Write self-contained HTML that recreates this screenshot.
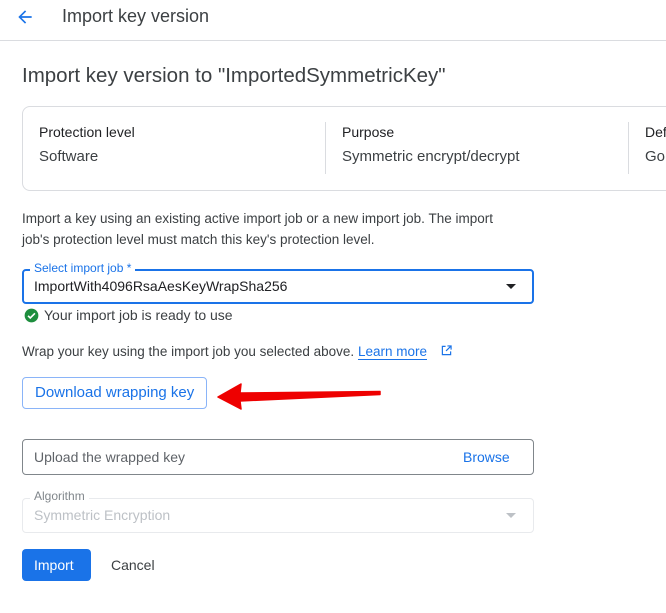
<!DOCTYPE html>
<html><head><meta charset="utf-8"><style>
body{margin:0;width:666px;height:613px;background:#fff;font-family:"Liberation Sans",Arial,sans-serif;color:#202124;position:relative;overflow:hidden}
.a{position:absolute;white-space:nowrap}
.t14{font-size:14px;color:#3c4043}
</style></head><body>
<svg class="a" style="left:15px;top:7px" width="20" height="20" viewBox="0 0 24 24"><path d="M20 11H7.83l5.59-5.59L12 4l-8 8 8 8 1.41-1.41L7.83 13H20v-2z" fill="#1a73e8"/></svg>
<div class="a" style="left:62px;top:6px;font-size:18px;color:#3c4043">Import key version</div>
<div class="a" style="left:0;top:40px;width:666px;height:1px;background:#dadce0"></div>
<div class="a" style="left:22px;top:64px;font-size:20.5px;color:#3c4043">Import key version to "ImportedSymmetricKey"</div>
<div class="a" style="left:22px;top:106px;width:660px;height:83px;border:1px solid #dadce0;border-radius:8px"></div>
<div class="a" style="left:325px;top:122px;width:1px;height:52px;background:#dadce0"></div>
<div class="a" style="left:628px;top:122px;width:1px;height:52px;background:#dadce0"></div>
<div class="a" style="left:39px;top:124px;font-size:14px">Protection level</div>
<div class="a" style="left:39px;top:148px;font-size:15px;color:#3c4043">Software</div>
<div class="a" style="left:342px;top:124px;font-size:14px">Purpose</div>
<div class="a" style="left:342px;top:148px;font-size:15px;color:#3c4043">Symmetric encrypt/decrypt</div>
<div class="a" style="left:645px;top:124px;font-size:14px">Def</div>
<div class="a" style="left:645px;top:148px;font-size:15px;color:#3c4043">Go</div>
<div class="a t14" style="left:22px;top:208px;line-height:21px;white-space:normal;width:500px;font-size:13.5px">Import a key using an existing active import job or a new import job. The import job's protection level must match this key's protection level.</div>
<div class="a" style="left:22px;top:269px;width:508px;height:31px;border:2px solid #1a73e8;border-radius:4px"></div>
<div class="a" style="left:30px;top:261px;background:#fff;padding:0 4px;font-size:12px;color:#1a73e8">Select import job *</div>
<div class="a" style="left:34px;top:278px;font-size:14px">ImportWith4096RsaAesKeyWrapSha256</div>
<div class="a" style="left:506px;top:284px;border-left:5px solid transparent;border-right:5px solid transparent;border-top:5px solid #202124"></div>
<svg class="a" style="left:24px;top:308px" width="15" height="15" viewBox="0 0 24 24"><circle cx="12" cy="12" r="11" fill="#1e8e3e"/><path d="M6.5 12.5l3.5 3.5 7.5-7.5" stroke="#fff" stroke-width="2.6" fill="none"/></svg>
<div class="a" style="left:44px;top:307px;font-size:14px;color:#3c4043">Your import job is ready to use</div>
<div class="a t14" style="left:22px;top:344px;font-size:13.5px">Wrap your key using the import job you selected above. <span style="color:#1a73e8;border-bottom:1px solid #1a73e8">Learn more</span></div>
<svg class="a" style="left:441px;top:345px" width="11" height="11" viewBox="0 0 12 12"><path d="M5 1.5H1.5v9h9V7M7 1h4v4M11 1L5.5 6.5" stroke="#1a73e8" stroke-width="1.3" fill="none"/></svg>
<div class="a" style="left:22px;top:377px;width:183px;height:30px;border:1px solid #8ab4f8;border-radius:4px"></div>
<div class="a" style="left:35px;top:384px;font-size:15px;color:#1a73e8">Download wrapping key</div>
<svg class="a" style="left:215px;top:382px" width="170" height="28"><path d="M3 15 L26 2 L25 11 L165 9.5 L165 12.5 L25 19 L26 27 Z" fill="#e00" stroke="#e00" stroke-width="1.5" stroke-linejoin="round"/></svg>
<div class="a" style="left:22px;top:439px;width:510px;height:34px;border:1px solid #80868b;border-radius:4px"></div>
<div class="a" style="left:34px;top:449px;font-size:14px;color:#5f6368">Upload the wrapped key</div>
<div class="a" style="left:463px;top:449px;font-size:14px;color:#1a73e8">Browse</div>
<div class="a" style="left:22px;top:498px;width:510px;height:33px;border:1px solid #e8eaed;border-radius:4px"></div>
<div class="a" style="left:30px;top:489px;background:#fff;padding:0 4px;font-size:12px;color:#80868b">Algorithm</div>
<div class="a" style="left:34px;top:507px;font-size:14px;color:#bdc1c6">Symmetric Encryption</div>
<div class="a" style="left:506px;top:513px;border-left:5px solid transparent;border-right:5px solid transparent;border-top:5px solid #bdc1c6"></div>
<div class="a" style="left:22px;top:549px;width:69px;height:32px;background:#1a73e8;border-radius:4px"></div>
<div class="a" style="left:34px;top:557px;font-size:14px;color:#fff">Import</div>
<div class="a" style="left:111px;top:557px;font-size:14px;color:#3c4043">Cancel</div>
</body></html>
